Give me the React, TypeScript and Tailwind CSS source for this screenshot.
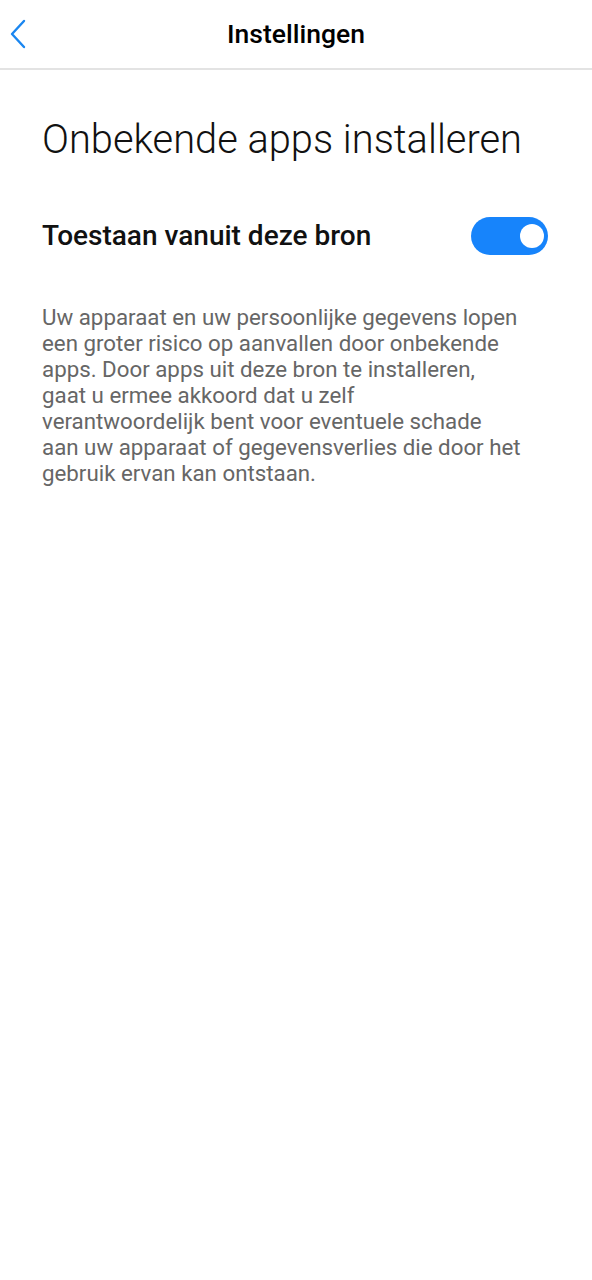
const lines = [
  "Uw apparaat en uw persoonlijke gegevens lopen",
  "een groter risico op aanvallen door onbekende",
  "apps. Door apps uit deze bron te installeren,",
  "gaat u ermee akkoord dat u zelf",
  "verantwoordelijk bent voor eventuele schade",
  "aan uw apparaat of gegevensverlies die door het",
  "gebruik ervan kan ontstaan.",
];

export default function App() {
  return (
    <div className="min-h-screen w-full bg-white" style={{ fontFamily: "Roboto, 'Noto Sans', sans-serif" }}>
      <header className="relative flex h-[70px] items-center justify-center border-b-2 border-[#e3e3e3]">
        <button className="absolute left-[8px] top-[19px] text-[#1a86f0]">
          <svg width="20" height="30" viewBox="0 0 20 30" fill="none" stroke="currentColor" strokeWidth="2.4" strokeLinecap="round" strokeLinejoin="round">
            <path d="M16 2 L4 15 L16 28" />
          </svg>
        </button>
        <h1 className="text-[26.5px] font-medium text-black">Instellingen</h1>
      </header>

      <main className="px-[42px]">
        <h2 className="mt-[46px] text-[39.8px] font-light leading-[48px] text-[#111]">Onbekende apps installeren</h2>

        <div className="mt-[51px] flex items-center justify-between">
          <span className="text-[28px] font-medium text-[#111]">Toestaan vanuit deze bron</span>
          <div className="mr-[2px] flex h-[38px] w-[77px] items-center justify-end rounded-full bg-[#1784fb] pr-[4px]">
            <div className="h-[24px] w-[24px] rounded-full bg-white" />
          </div>
        </div>

        <p className="mt-[47px] whitespace-nowrap text-[22.3px] leading-[26px] text-[#666]">
          {lines.map((l, i) => (
            <span key={i} className="block">{l}</span>
          ))}
        </p>
      </main>
    </div>
  );
}
